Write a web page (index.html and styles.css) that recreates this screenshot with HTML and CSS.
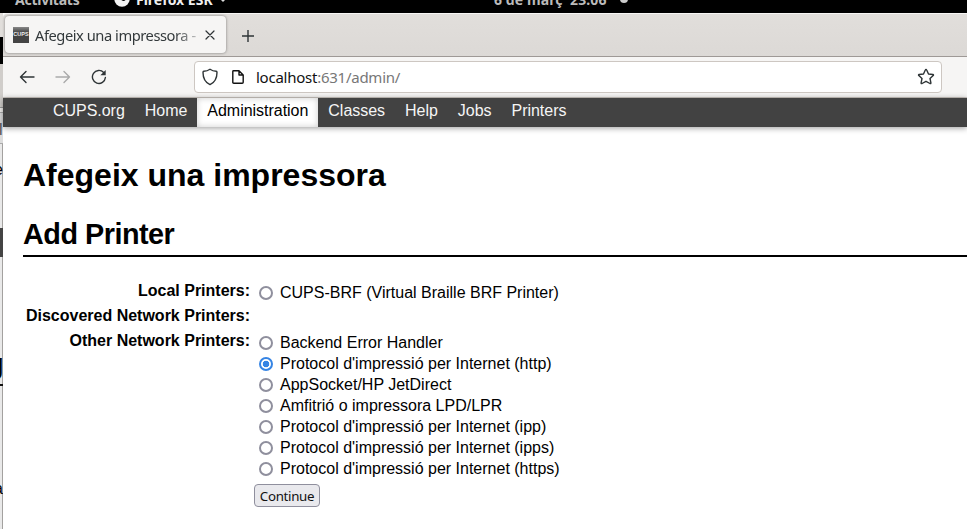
FILE: index.html
```html
<!DOCTYPE html>
<html lang="ca">
<head>
<meta charset="utf-8">
<title>Afegeix una impressora - CUPS</title>
<link rel="stylesheet" href="styles.css">
</head>
<body>
<div class="desktop">
  <div class="panel">
    <span class="activities">Activitats</span>
    <svg class="app-icon" width="16" height="16" viewBox="0 0 16 16"><circle cx="8" cy="8" r="7.7" fill="#f4f4f4"/><path d="M7 5.5C7 9 9.500 10 11 8.500C12 7.500 11 6 10 5.500" fill="none" stroke="#000" stroke-width="1.500"/></svg>
    <span class="app-name">Firefox ESR</span>
    <span class="app-arrow"></span>
    <span class="clock">6 de març&nbsp; 23:06</span>
    <span class="notice"></span>
  </div>
  <div class="workspace">
    <div class="behind">
      <div class="b-title"></div><div class="b-black"></div><div class="b-bar"></div>
      <div class="b-row"></div><div class="b-row b-l"><span>l</span></div>
      <div class="b-text"><span>e</span></div><div class="b-dark"></div>
      <div class="b-page"><b>g</b></div><div class="b-page b-low"><span>a</span></div>
    </div>
    <div class="window">
      <div class="tabs">
        <div class="tab">
          <span class="favicon">CUPS</span>
          <span class="tab-title">Afegeix una impressora - CUPS</span>
          <svg class="close" width="10" height="10" viewBox="0 0 10 10"><path d="M1 1L9 9M9 1L1 9"/></svg>
        </div>
        <svg class="plus" width="14" height="14" viewBox="0 0 14 14"><path d="M7 1V13M1 7H13"/></svg>
      </div>
      <div class="toolbar">
        <svg class="back" width="16" height="16" viewBox="0 0 16 16"><path d="M15 8H1.500M7 2.500L1.500 8L7 13.500"/></svg>
        <svg class="forward" width="16" height="16" viewBox="0 0 16 16"><path d="M1 8H14.500M9 2.500L14.500 8L9 13.500"/></svg>
        <svg class="reload" width="16" height="16" viewBox="0 0 16 16"><path d="M12.700 3.500A6.500 6.500 0 1 0 14.400 8.500"/><path class="solid" d="M14.700 1V6.300H9.400Z"/></svg>
        <div class="address">
          <svg class="shield" width="16" height="18" viewBox="0 0 16 18"><path d="M8 1.200C6 2.600 3.800 3.200 1.800 3.300C1.200 3.400 1 3.800 1 4.400C1 10 3 14.200 8 16.600C13 14.200 15 10 15 4.400C15 3.800 14.800 3.400 14.200 3.300C12.200 3.200 10 2.600 8 1.200Z"/></svg>
          <svg class="page-icon" width="14" height="16" viewBox="0 0 14 16"><path d="M2.500 1.800H8L12.200 6V13.200Q12.200 14.200 11.200 14.200H2.800Q1.800 14.200 1.800 13.200V2.500Q1.800 1.800 2.500 1.800ZM8 2V6H12"/></svg>
          <span class="url"><b>localhost</b>:631/admin/</span>
          <svg class="star" width="18" height="18" viewBox="0 0 18 18"><path d="M9 1.500Q9.500 1.500 9.700 2L11.500 6L15.900 6.500Q16.900 6.700 16.200 7.500L13 10.500L13.900 14.900Q14 16 13 15.500L9 13.300L5 15.500Q4 16 4.100 14.900L5 10.500L1.800 7.500Q1.100 6.700 2.100 6.500L6.500 6L8.300 2Q8.500 1.500 9 1.500Z"/></svg>
        </div>
      </div>
      <nav class="nav">
        <a>CUPS.org</a><a>Home</a><a class="active">Administration</a><a>Classes</a><a>Help</a><a>Jobs</a><a>Printers</a>
      </nav>
      <main>
        <h1>Afegeix una impressora</h1>
        <h2>Add Printer</h2>
        <form class="form">
          <div class="label">Local Printers:</div>
          <div class="options"><label><input type="radio" name="device">CUPS-BRF (Virtual Braille BRF Printer)</label></div>
          <div class="label">Discovered Network Printers:</div>
          <div class="options"></div>
          <div class="label">Other Network Printers:</div>
          <div class="options">
            <label><input type="radio" name="device">Backend Error Handler</label>
            <label><input type="radio" name="device" checked>Protocol d'impressió per Internet (http)</label>
            <label><input type="radio" name="device">AppSocket/HP JetDirect</label>
            <label><input type="radio" name="device">Amfitrió o impressora LPD/LPR</label>
            <label><input type="radio" name="device">Protocol d'impressió per Internet (ipp)</label>
            <label><input type="radio" name="device">Protocol d'impressió per Internet (ipps)</label>
            <label><input type="radio" name="device">Protocol d'impressió per Internet (https)</label>
          </div>
          <div></div>
          <button type="button">Continue</button>
        </form>
      </main>
    </div>
  </div>
</div>
</body>
</html>
```
FILE: styles.css
```css
* { box-sizing: border-box; }
body { margin: 0; background: #000; font-family: "Liberation Sans", sans-serif; }
svg { flex: none; fill: none; stroke: #2e3436; stroke-width: 1.4; stroke-linecap: round; stroke-linejoin: round; }
.desktop { width: 967px; height: 529px; overflow: hidden; display: flex; flex-direction: column; }

.panel { height: 13px; flex: none; display: flex; align-items: flex-start; padding-left: 15px; overflow: hidden; background: #000; color: #f0f0f0; font: bold 14px/20px "Noto Sans", sans-serif; white-space: nowrap; }
.panel span { flex: none; }
.activities, .app-name, .clock { margin-top: -10px; }
.activities { width: 99px; color: #bbb; letter-spacing: -.25px; }
.app-icon { margin-top: -9px; stroke: none; }
.app-name { margin-left: 6px; width: 84px; }
.app-arrow { border: 3px solid transparent; border-top: 3px solid #ddd; border-bottom: 0; margin-top: -1px; }
.clock { margin-left: 268px; width: 126px; color: #bbb; letter-spacing: .1px; }
.notice { width: 8px; height: 8px; border-radius: 50%; background: #ccc; margin-top: -5px; }

.workspace { flex: 1; display: flex; min-height: 0; }
.behind { width: 3px; flex: none; overflow: hidden; background: linear-gradient(to right, #e9e9e9 2px, #a3a19f 2px); font-size: 16px; }
.behind span, .behind b { display: block; width: 9px; margin-left: -6px; line-height: 18px; }
.b-title { height: 24px; background: #e1dedb; }
.b-black { height: 27px; background: #000; }
.b-bar { height: 44px; background: #d0cdca; border-bottom: 1px solid #999; }
.b-row { height: 5px; background: #f0eeec; border-bottom: 1px solid #aaa; }
.b-l { height: 31px; padding-top: 8px; background: #ddd; }
.behind .b-l span { margin-left: -1px; color: #555; }
.b-text { height: 84px; padding-top: 17px; }
.b-dark { height: 29px; background: #444; }
.b-page { height: 129px; padding-top: 91px; border-bottom: 2px solid #111; }
.behind .b-page b { margin-left: -14px; width: 18px; font-size: 29px; line-height: 33px; }
.b-low { padding-top: 94px; border: 0; }

.window { flex: 1; min-width: 0; display: flex; flex-direction: column; background: #fff; }
.tabs { height: 44px; flex: none; display: flex; background: linear-gradient(#e1dedb, #dcd9d6); border-top: 1px solid #f7f6f5; border-bottom: 1px solid #9e9996; border-top-left-radius: 4px; padding: 2px 0 0 2px; }
.tab { width: 221px; height: 37px; padding-left: 8px; display: flex; align-items: center; background: #f6f5f4; border-radius: 4px; box-shadow: 0 0 3px rgba(0,0,0,.45); font: 14.7px/20px "Noto Sans", sans-serif; color: #33393b; }
.favicon { width: 16px; height: 16px; flex: none; background: linear-gradient(#888 0%, #444 35%, #444 100%); color: #eee; font: bold 5.5px/15px "Liberation Sans", sans-serif; text-align: center; }
.tab-title { width: 165px; flex: none; margin-left: 6px; overflow: hidden; white-space: nowrap; letter-spacing: -.46px; -webkit-mask-image: linear-gradient(to right, #000 140px, transparent 170px); mask-image: linear-gradient(to right, #000 140px, transparent 170px); }
.close { margin-left: 5px; stroke-width: 1.2; }
.plus { margin: 13px 0 0 15px; stroke-width: 1.4; stroke-linecap: butt; }
.toolbar { height: 41px; flex: none; display: flex; align-items: center; background: #f6f5f4; border-bottom: 1px solid #cdc7c2; padding-left: 16px; }
.forward { margin-left: 20px; stroke: #aaa; }
.reload { margin-left: 20px; }
.solid { fill: #2e3436; stroke: none; }
.address { width: 748px; height: 32px; margin-left: 87px; padding-left: 7px; display: flex; align-items: center; background: #fff; border: 1px solid #cdc7c2; border-radius: 4px; }
.page-icon { margin-left: 13px; stroke: #111; }
.url { margin-left: 11px; width: 645px; font: 15px/20px "Noto Sans", sans-serif; letter-spacing: -.25px; color: #777; white-space: nowrap; }
.url b { color: #111; font-weight: 400; }
.star { margin-left: auto; margin-right: 6px; }

.nav { height: 29px; flex: none; padding-left: 40px; display: flex; background: #424242; color: #f5f5f5; box-shadow: 0 1px 6px rgba(0,0,0,.4); }
.nav a { padding: 3px 10px 0; font-size: 16px; line-height: 20px; letter-spacing: -.03px; }
.nav .active { background: #fff; color: #000; box-shadow: inset 0 0 6px rgba(0,0,0,.2); }
main { padding-left: 20px; color: #000; }
h1 { margin: 28px 0 0; font-size: 32px; line-height: 40px; }
h2 { margin: 21px 0 0; height: 41px; font-size: 28.8px; letter-spacing: -.5px; line-height: 36px; border-bottom: 2px solid #000; }
.form { margin-top: 21px; display: grid; grid-template-columns: 227px auto; grid-template-rows: 25px 25px 156px 23px; column-gap: 4px; font-size: 16px; }
.label { font-weight: 700; text-align: right; line-height: 25px; }
.options { padding-top: 4px; }
.options label { display: flex; align-items: center; height: 21px; line-height: 21px; white-space: nowrap; }
input { appearance: none; width: 14px; height: 14px; margin: 0 7px 0 5px; border: 2px solid #8f8f9d; border-radius: 50%; background: #fff; }
input:checked { border-color: #3584e4; background: radial-gradient(circle, #3584e4 3px, #fff 3.6px); }
button { justify-self: start; width: 66px; height: 23px; padding: 0; border: 1px solid #8f8f9d; border-radius: 4px; background: #e9e9ed; color: #111; font: 13.3px/20px "Noto Sans", sans-serif; letter-spacing: -.3px; }
```
